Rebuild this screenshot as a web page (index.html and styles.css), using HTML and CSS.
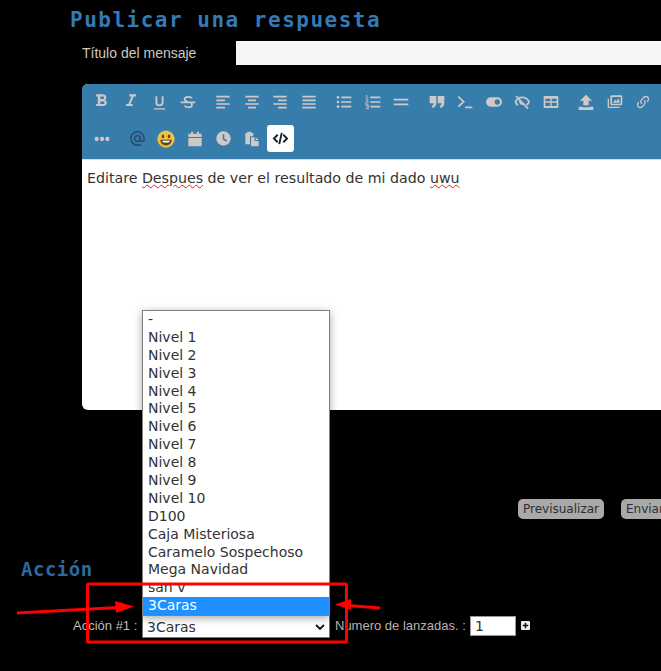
FILE: index.html
```html
<!DOCTYPE html>
<html lang="es">
<head>
<meta charset="utf-8">
<title>Publicar una respuesta</title>
<link rel="stylesheet" href="styles.css">
</head>
<body>
<main class="page">
  <h1 class="title">Publicar una respuesta</h1>
  <div class="subject">
    <label class="subject-label">Título del mensaje</label>
    <input class="subject-input" type="text">
  </div>
  <section class="editor">
    <div class="toolbar">
      <div class="tb-row">
        <div class="tb-group">
          <span class="tb tb-letter"><svg viewBox="0 0 24 24"><path d="M13.5,15.5H10V12.5H13.5A1.5,1.5 0 0,1 15,14A1.5,1.5 0 0,1 13.5,15.5M10,6.5H13A1.5,1.5 0 0,1 14.5,8A1.5,1.500 0 0,1 13,9.5H10M15.6,10.79C16.57,10.11 17.25,9 17.25,8C17.25,5.74 15.5,4 13.25,4H5V6.5H7V15.5H5V18H14.04C16.14,18 17.75,16.3 17.75,14.21C17.75,12.69 16.89,11.39 15.6,10.79Z"/></svg></span>
          <span class="tb tb-letter"><svg viewBox="0 0 24 24"><path d="M10,4V6.5H12.6L8.8,15.5H6V18H14V15.5H11.4L15.2,6.5H18V4H10Z"/></svg></span>
          <span class="tb tb-under"><svg viewBox="0 0 24 24"><path d="M3,21H21V23H3V21M12,18A6.5,6.5 0 0,0 18.5,11.5V2H15.5V11.5A3.5,3.5 0 0,1 12,15A3.5,3.5 0 0,1 8.5,11.5V2H5.5V11.5A6.5,6.5 0 0,0 12,18Z"/></svg></span>
          <span class="tb"><svg viewBox="0 0 24 24"><path class="ln" d="M18 6.5C16 3.5 7 3 7 8C7 10.5 10 11.5 12 12M7 17.5C9 21 18 21 18 16C18 14.5 17.3 13.5 16 13M1 12.5H23"/></svg></span>
        </div>
        <div class="tb-group">
          <span class="tb"><svg viewBox="0 0 24 24"><path class="ln" d="M2 4H22M2 9.500H15M2 15H22M2 20.500H15"/></svg></span>
          <span class="tb"><svg viewBox="0 0 24 24"><path class="ln" d="M2 4H22M6 9.500H18M2 15H22M6 20.500H18"/></svg></span>
          <span class="tb"><svg viewBox="0 0 24 24"><path class="ln" d="M2 4H22M9 9.500H22M2 15H22M9 20.500H22"/></svg></span>
          <span class="tb"><svg viewBox="0 0 24 24"><path class="ln" d="M2 4H22M2 9.500H22M2 15H22M2 20.500H22"/></svg></span>
        </div>
        <div class="tb-group">
          <span class="tb"><svg viewBox="0 0 24 24"><path class="ln" d="M8 5H23M8 12H23M8 19H23"/><circle cx="3" cy="5" r="2"/><circle cx="3" cy="12" r="2"/><circle cx="3" cy="19" r="2"/></svg></span>
          <span class="tb"><svg viewBox="0 0 24 24"><path class="ln" d="M8 5H23M8 12H23M8 19H23"/><path class="thin" d="M1 2.500H3V7M1 7.500H5M1 10H4.500V13H1V15.500H5M1 17H5V22H1M2 19.500H5"/></svg></span>
          <span class="tb"><svg viewBox="0 0 24 24"><path class="ln" d="M1 8.500H23M1 15.500H23"/></svg></span>
        </div>
        <div class="tb-group">
          <span class="tb"><svg viewBox="0 0 24 24"><path d="M1 3H11V13C11 17 9 20 5 21L4 18C6 17.500 6.800 16 7 14H1ZM13 3H23V13C23 17 21 20 17 21L16 18C18 17.500 18.800 16 19 14H13Z"/></svg></span>
          <span class="tb"><svg viewBox="0 0 24 24"><path class="ln" d="M2 4L10 11.500L2 19M12 20H23"/></svg></span>
          <span class="tb"><svg viewBox="0 0 24 24"><path fill-rule="evenodd" d="M7 5H17A7 7 0 0 1 17 19H7A7 7 0 0 1 7 5ZM17 8A4 4 0 1 0 17 16A4 4 0 1 0 17 8Z"/></svg></span>
          <span class="tb"><svg viewBox="0 0 24 24"><path class="ln" d="M3 3L21 22M2 12C6 5 12 3.500 19 7C20.500 8 22 10 22.500 12C21.500 14 20.500 15.500 19 16.500M6 16.500C4 15.500 3 14 2 12M9 9.500C8 13 11 16 14.500 15"/></svg></span>
          <span class="tb"><svg viewBox="0 0 24 24"><path fill-rule="evenodd" d="M3 3H21A2 2 0 0 1 23 5V19A2 2 0 0 1 21 21H3A2 2 0 0 1 1 19V5A2 2 0 0 1 3 3ZM3.500 7V11H11V7ZM13 7V11H20.500V7ZM3.500 13V18H11V13ZM13 13V18H20.500V13Z"/></svg></span>
        </div>
        <div class="tb-group">
          <span class="tb"><svg viewBox="0 0 24 24"><path d="M12 1L21 10H16V17H8V10H3ZM1 19H6.500V20H17.500V19H23V24H1Z"/></svg></span>
          <span class="tb"><svg viewBox="0 0 24 24"><path fill-rule="evenodd" d="M7 2H21A2 2 0 0 1 23 4V15A2 2 0 0 1 21 17H7A2 2 0 0 1 5 15V4A2 2 0 0 1 7 2ZM7.500 4.500V14.500H20.500V4.500ZM1 7H3V19H19V21H3A2 2 0 0 1 1 19ZM9 13L12 8.500L14.500 11L17 6.500L19.500 13Z"/></svg></span>
          <span class="tb"><svg viewBox="0 0 24 24"><path d="M10.59,13.41C11,13.8 11,14.44 10.59,14.83C10.2,15.22 9.56,15.22 9.17,14.83C7.22,12.88 7.22,9.71 9.17,7.76V7.76L12.71,4.22C14.66,2.27 17.83,2.27 19.78,4.22C21.73,6.17 21.73,9.34 19.78,11.29L18.29,12.78C18.3,11.96 18.17,11.14 17.89,10.36L18.36,9.88C19.54,8.71 19.54,6.81 18.36,5.64C17.19,4.46 15.29,4.46 14.12,5.64L10.59,9.17C9.41,10.34 9.41,12.24 10.59,13.41M13.41,9.17C13.8,8.78 14.44,8.78 14.83,9.17C16.78,11.12 16.78,14.29 14.83,16.24V16.24L11.29,19.78C9.34,21.73 6.17,21.73 4.22,19.78C2.27,17.83 2.27,14.66 4.22,12.71L5.71,11.22C5.7,12.04 5.83,12.86 6.11,13.65L5.64,14.12C4.46,15.29 4.46,17.19 5.64,18.36C6.81,19.54 8.71,19.54 9.88,18.36L13.41,14.83C14.59,13.66 14.59,11.76 13.41,10.59C13,10.2 13,9.56 13.41,9.17Z"/></svg></span>
        </div>
      </div>
      <div class="tb-row">
        <div class="tb-group">
          <span class="tb"><svg viewBox="0 0 24 24"><circle cx="4" cy="12" r="3.200"/><circle cx="12" cy="12" r="3.200"/><circle cx="20" cy="12" r="3.200"/></svg></span>
        </div>
        <div class="tb-group">
          <span class="tb tb-at"><svg viewBox="0 0 24 24"><path class="ln" d="M16 12A4 4 0 1 1 16 11.900V14C16 17 21.500 17 21.500 12A9.500 9.500 0 1 0 17 20"/></svg></span>
          <span class="tb tb-smile"><svg viewBox="0 0 24 24"><circle class="face" cx="12" cy="12" r="11.500"/><ellipse class="eye" cx="8" cy="8.500" rx="1.700" ry="2.500"/><ellipse class="eye" cx="16" cy="8.500" rx="1.700" ry="2.500"/><path class="eye" d="M4.500 13H19.500C19.500 18 16 20.500 12 20.500C8 20.500 4.500 18 4.500 13Z"/><path class="teeth" d="M7 14.200H17C16.700 15.500 16 16.200 15 16.500H9C8 16.200 7.300 15.500 7 14.200Z"/></svg></span>
          <span class="tb"><svg viewBox="0 0 24 24"><path d="M6 1H9V4H15V1H18V4H22V9H2V4H6ZM2 10.500H22V23H2Z"/></svg></span>
          <span class="tb tb-clock"><svg viewBox="0 0 24 24"><circle cx="12" cy="12" r="11.500"/><path class="hand" d="M12 5V13L17 16"/></svg></span>
          <span class="tb"><svg viewBox="0 0 24 24"><path d="M5 1H11V3H14V8H9V20H2V3H5ZM10.500 9.500H16V15H22V23H10.500ZM17.500 9.500L22 13.500H17.500Z"/></svg></span>
          <span class="tb tb-code"><svg viewBox="0 0 24 24"><path class="ln" d="M7.500 6L1.500 12L7.500 18M16.500 6L22.500 12L16.500 18M14 3L10 21"/></svg></span>
        </div>
      </div>
    </div>
    <div class="content">Editare <span class="misspelled">Despues</span> de ver el resultado de mi dado <span class="misspelled">uwu</span></div>
  </section>
  <div class="submit-row">
    <button class="btn" type="button">Previsualizar</button>
    <button class="btn" type="button">Enviar</button>
  </div>
  <h2 class="section-title">Acción</h2>
  <div class="action-row">
    <label class="action-label">Acción #1 :</label>
    <div class="select-wrap">
      <select class="action-select"><option>3Caras</option></select>
      <svg class="chevron" viewBox="0 0 10 6"><path d="M1 1L5 5L9 1"/></svg>
    </div>
    <label class="count-label">Numero de lanzadas. :</label>
    <input class="count-input" type="text" value="1">
    <span class="plus"><svg viewBox="0 0 10 10"><path d="M5 2V8M2 5H8"/></svg></span>
  </div>
</main>
<ul class="dropdown">
  <li>-</li><li>Nivel 1</li><li>Nivel 2</li><li>Nivel 3</li><li>Nivel 4</li><li>Nivel 5</li><li>Nivel 6</li><li>Nivel 7</li><li>Nivel 8</li><li>Nivel 9</li><li>Nivel 10</li><li>D100</li><li>Caja Misteriosa</li><li>Caramelo Sospechoso</li><li>Mega Navidad</li><li>san v</li><li class="selected">3Caras</li>
</ul>
<svg class="annotation" viewBox="0 0 661 671">
  <rect x="87.500" y="584" width="259" height="58" rx="1"/>
  <path d="M17 613L118 607.500"/>
  <path class="head" d="M115 601L134 606.500L116 613Z"/>
  <path d="M380 608L348 605.500"/>
  <path class="head" d="M335 604.500L351 599V610Z"/>
</svg>
</body>
</html>
```
FILE: styles.css
```css
* { box-sizing: border-box; }
html, body { margin: 0; height: 671px; overflow: hidden; background: #000; }
body { position: relative; font-family: "Liberation Sans", Arial, sans-serif; }
.page { width: 661px; height: 671px; overflow: hidden; }

.title {
  margin: 7px 0 0 70px;
  height: 26px;
  font: 700 21px/26px "DejaVu Sans Mono", monospace;
  letter-spacing: 1.5px;
  color: #337ab7;
  white-space: nowrap;
}
.subject { display: flex; align-items: center; margin: 8px 0 0 82px; height: 24px; }
.subject-label { width: 154px; font-size: 14px; color: #cfc8bf; }
.subject-input { flex: 1; height: 24px; border: 0; padding: 0; background: #f6f6f6; }

.editor { width: 640px; margin: 19px 0 0 82px; border-radius: 6px; overflow: hidden; background: #fff; }
.toolbar { height: 76px; padding: 0 0 0 6px; background: #367dac; border-bottom: 1px solid #d8dde0; }
.tb-row { display: flex; gap: 7px; height: 36.500px; padding-top: 4px; }
.tb-group { display: flex; }
.tb { display: flex; align-items: center; justify-content: center; width: 28.500px; height: 28px; }
.tb svg { width: 16px; height: 16px; fill: #cfc8c8; overflow: visible; }
.tb .ln { fill: none; stroke: #cfc8c8; stroke-width: 2.600; }
.tb .thin { fill: none; stroke: #cfc8c8; stroke-width: 1.200; }
.tb-letter svg { width: 20px; height: 20px; margin-top: -2px; }
.tb-under svg { width: 15px; height: 15px; }
.tb-at svg { width: 17px; height: 17px; }
.tb-at .ln { stroke: #2b4e6e; stroke-width: 2.400; }
.tb-smile svg { width: 18px; height: 18px; }
.tb-smile .face { fill: #f0c040; }
.tb-smile .eye { fill: #5a4526; }
.tb-smile .teeth { fill: #fff; }
.tb-clock svg { width: 15px; height: 15px; }
.tb-clock .hand { fill: none; stroke: #367dac; stroke-width: 2.500; }
.tb-code { background: #fff; border-radius: 3px; width: 27px; height: 27px; margin-left: 1px; }
.tb-code svg { width: 15px; height: 15px; }
.tb-code .ln { stroke: #16202a; stroke-width: 3; }

.content { height: 250px; padding: 9px 5px; font: 14.200px/18px "DejaVu Sans", sans-serif; color: #333; }
.misspelled { text-decoration: underline wavy #e02020 1px; text-underline-offset: 1px; }

.submit-row { display: flex; gap: 17px; margin: 89px 0 0 518px; width: 200px; }
.btn {
  flex: none; height: 20px; padding: 0 5px; border: 0; border-radius: 5px;
  background: #a9a9a9; color: #2e2e2e;
  font: 12px/20px "DejaVu Sans", sans-serif;
}

.section-title {
  margin: 37px 0 0 21px; height: 26px;
  font: 700 19px/26px "DejaVu Sans Mono", monospace;
  letter-spacing: .5px;
  color: #2c6a9e;
}
.action-row { display: flex; align-items: center; margin: 32px 0 0 73px; height: 24px; white-space: nowrap; }
.action-label { width: 69px; margin-top: -2px; font-size: 13px; color: #c4bdb4; }
.select-wrap { position: relative; width: 188px; height: 24px; }
.action-select {
  display: block; width: 188px; height: 24px; padding: 2px 0 0 4px; border: 1px solid #767676; border-radius: 0;
  appearance: none; background: #fff; color: #333; font: 14px "DejaVu Sans", sans-serif;
}
.chevron { position: absolute; right: 5px; top: 10px; width: 10px; height: 6px; fill: none; stroke: #111; stroke-width: 1.800; }
.count-label { margin: -2px 0 0 5px; width: 135px; font-size: 13px; color: #b9b2aa; }
.count-input {
  width: 46px; height: 20px; padding: 0 4px; border: 1px solid #999;
  background: #fff; color: #333; font: 14px "DejaVu Sans", sans-serif;
}
.plus { display: block; width: 9px; height: 9px; margin: -2px 0 0 5px; background: #eee; border-radius: 1px; }
.plus svg { display: block; width: 9px; height: 9px; fill: none; stroke: #111; stroke-width: 1.600; }

.dropdown {
  position: absolute; left: 142px; top: 310px; width: 188px; margin: 0; padding: 0;
  list-style: none; background: #fff; border: 1px solid #808080;
  box-shadow: 0 2px 8px rgba(0, 0, 0, .35);
  font: 14px/17.900px "DejaVu Sans", sans-serif; color: #333;
}
.dropdown li { height: 17.900px; padding-left: 5px; white-space: nowrap; }
.dropdown .selected { background: #1e90ff; color: #fff; }

.annotation { position: absolute; left: 0; top: 0; width: 661px; height: 671px; fill: none; stroke: #f00; stroke-width: 3; pointer-events: none; }
.annotation .head { fill: #f00; stroke: none; }
```
